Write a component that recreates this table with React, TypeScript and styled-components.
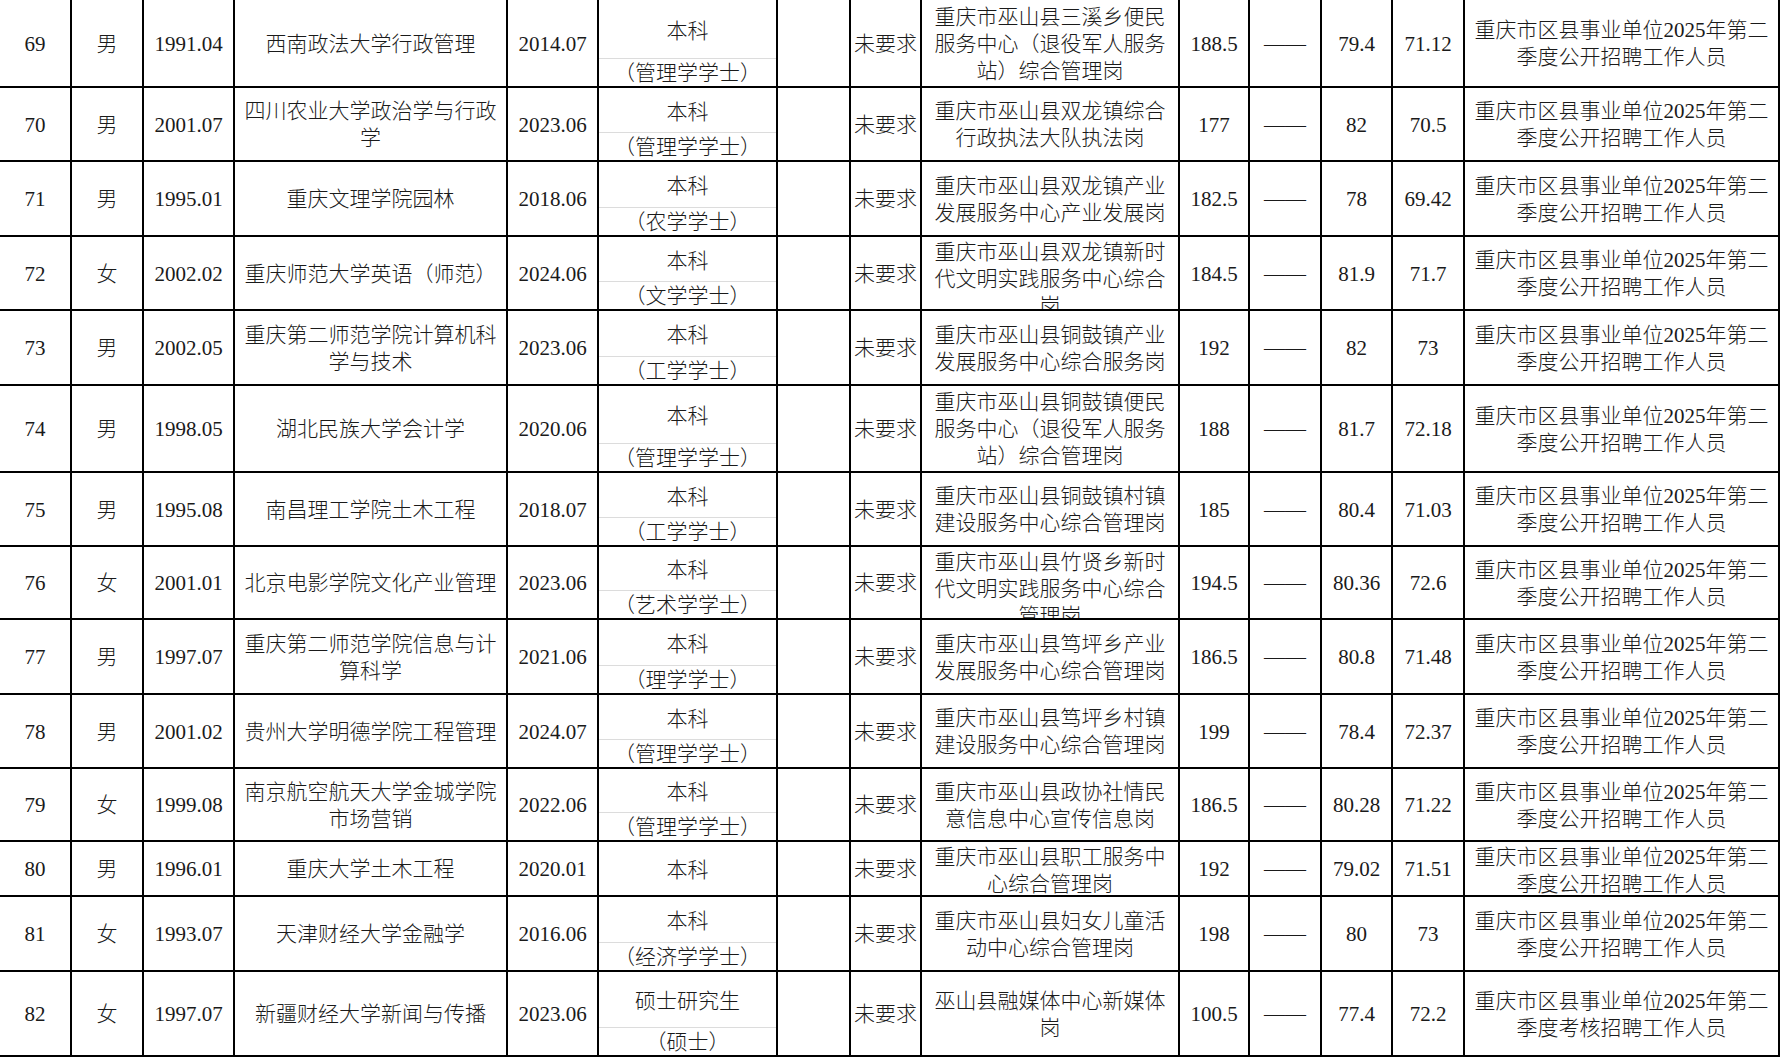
import React from 'react'
import styled, { createGlobalStyle } from 'styled-components'

const GlobalStyle = createGlobalStyle`
  html, body {
    margin: 0;
    padding: 0;
    background: #ffffff;
    overflow: hidden;
  }
  body {
    font-family: 'Liberation Serif', 'Noto Sans CJK SC', serif;
    color: #1a1a1a;
  }
`

// column widths measured from the sheet, right border included
const COLUMNS = [72, 72, 91, 273, 91, 179, 73, 71, 258, 70, 72, 71, 72, 315]

type Person = {
  no: number
  sex: string
  born: string
  major: string
  graduated: string
  degree: string
  title?: string
  position: string
  written: string
  interview: string
  total: string
  batch: string
  height: number
}

const OPEN = '重庆市区县事业单位2025年第二\n季度公开招聘工作人员'
const CHECK = '重庆市区县事业单位2025年第二\n季度考核招聘工作人员'

const people: Person[] = [
  { no: 69, sex: '男', born: '1991.04', major: '西南政法大学行政管理', graduated: '2014.07', degree: '本科', title: '（管理学学士）', position: '重庆市巫山县三溪乡便民\n服务中心（退役军人服务\n站）综合管理岗', written: '188.5', interview: '79.4', total: '71.12', batch: OPEN, height: 88 },
  { no: 70, sex: '男', born: '2001.07', major: '四川农业大学政治学与行政\n学', graduated: '2023.06', degree: '本科', title: '（管理学学士）', position: '重庆市巫山县双龙镇综合\n行政执法大队执法岗', written: '177', interview: '82', total: '70.5', batch: OPEN, height: 74 },
  { no: 71, sex: '男', born: '1995.01', major: '重庆文理学院园林', graduated: '2018.06', degree: '本科', title: '（农学学士）', position: '重庆市巫山县双龙镇产业\n发展服务中心产业发展岗', written: '182.5', interview: '78', total: '69.42', batch: OPEN, height: 75 },
  { no: 72, sex: '女', born: '2002.02', major: '重庆师范大学英语（师范）', graduated: '2024.06', degree: '本科', title: '（文学学士）', position: '重庆市巫山县双龙镇新时\n代文明实践服务中心综合\n岗', written: '184.5', interview: '81.9', total: '71.7', batch: OPEN, height: 74 },
  { no: 73, sex: '男', born: '2002.05', major: '重庆第二师范学院计算机科\n学与技术', graduated: '2023.06', degree: '本科', title: '（工学学士）', position: '重庆市巫山县铜鼓镇产业\n发展服务中心综合服务岗', written: '192', interview: '82', total: '73', batch: OPEN, height: 75 },
  { no: 74, sex: '男', born: '1998.05', major: '湖北民族大学会计学', graduated: '2020.06', degree: '本科', title: '（管理学学士）', position: '重庆市巫山县铜鼓镇便民\n服务中心（退役军人服务\n站）综合管理岗', written: '188', interview: '81.7', total: '72.18', batch: OPEN, height: 87 },
  { no: 75, sex: '男', born: '1995.08', major: '南昌理工学院土木工程', graduated: '2018.07', degree: '本科', title: '（工学学士）', position: '重庆市巫山县铜鼓镇村镇\n建设服务中心综合管理岗', written: '185', interview: '80.4', total: '71.03', batch: OPEN, height: 74 },
  { no: 76, sex: '女', born: '2001.01', major: '北京电影学院文化产业管理', graduated: '2023.06', degree: '本科', title: '（艺术学学士）', position: '重庆市巫山县竹贤乡新时\n代文明实践服务中心综合\n管理岗', written: '194.5', interview: '80.36', total: '72.6', batch: OPEN, height: 73 },
  { no: 77, sex: '男', born: '1997.07', major: '重庆第二师范学院信息与计\n算科学', graduated: '2021.06', degree: '本科', title: '（理学学士）', position: '重庆市巫山县笃坪乡产业\n发展服务中心综合管理岗', written: '186.5', interview: '80.8', total: '71.48', batch: OPEN, height: 75 },
  { no: 78, sex: '男', born: '2001.02', major: '贵州大学明德学院工程管理', graduated: '2024.07', degree: '本科', title: '（管理学学士）', position: '重庆市巫山县笃坪乡村镇\n建设服务中心综合管理岗', written: '199', interview: '78.4', total: '72.37', batch: OPEN, height: 74 },
  { no: 79, sex: '女', born: '1999.08', major: '南京航空航天大学金城学院\n市场营销', graduated: '2022.06', degree: '本科', title: '（管理学学士）', position: '重庆市巫山县政协社情民\n意信息中心宣传信息岗', written: '186.5', interview: '80.28', total: '71.22', batch: OPEN, height: 73 },
  { no: 80, sex: '男', born: '1996.01', major: '重庆大学土木工程', graduated: '2020.01', degree: '本科', position: '重庆市巫山县职工服务中\n心综合管理岗', written: '192', interview: '79.02', total: '71.51', batch: OPEN, height: 55 },
  { no: 81, sex: '女', born: '1993.07', major: '天津财经大学金融学', graduated: '2016.06', degree: '本科', title: '（经济学学士）', position: '重庆市巫山县妇女儿童活\n动中心综合管理岗', written: '198', interview: '80', total: '73', batch: OPEN, height: 75 },
  { no: 82, sex: '女', born: '1997.07', major: '新疆财经大学新闻与传播', graduated: '2023.06', degree: '硕士研究生', title: '（硕士）', position: '巫山县融媒体中心新媒体\n岗', written: '100.5', interview: '77.4', total: '72.2', batch: CHECK, height: 85 },
]

const Sheet = styled.div`
  display: flex;
  flex-direction: column;
  width: 1780px;
`

const Row = styled.div<{ $height: number }>`
  display: grid;
  grid-template-columns: ${COLUMNS.map((w) => `${w}px`).join(' ')};
  height: ${(p) => p.$height}px;
  border-bottom: 2px solid #000;
  box-sizing: border-box;
`

const Cell = styled.div`
  display: flex;
  align-items: safe center;
  justify-content: center;
  box-sizing: border-box;
  border-right: 2px solid #000;
  overflow: hidden;
  padding: 2px 4px 0;
  font-size: 21px;
  line-height: 27px;
  font-weight: 300;
  text-align: center;
  white-space: pre;
`

const DegreeCell = styled.div`
  display: flex;
  flex-direction: column;
  box-sizing: border-box;
  border-right: 2px solid #000;
  overflow: hidden;
  font-size: 21px;
  line-height: 26px;
  font-weight: 300;
`

const DegreeTop = styled.div`
  flex: 1;
  display: flex;
  align-items: center;
  justify-content: center;
  padding-top: 3px;
`

const DegreeTitle = styled.div`
  height: 27px;
  flex: none;
  display: flex;
  align-items: flex-end;
  justify-content: center;
  border-top: 1px solid #dcdcdc;
`

function App() {
  return (
    <>
      <GlobalStyle />
      <Sheet>
        {people.map((p) => (
          <Row key={p.no} $height={p.height}>
            <Cell>{p.no}</Cell>
            <Cell>{p.sex}</Cell>
            <Cell>{p.born}</Cell>
            <Cell>{p.major}</Cell>
            <Cell>{p.graduated}</Cell>
            <DegreeCell>
              <DegreeTop>{p.degree}</DegreeTop>
              {p.title && <DegreeTitle>{p.title}</DegreeTitle>}
            </DegreeCell>
            <Cell />
            <Cell>未要求</Cell>
            <Cell>{p.position}</Cell>
            <Cell>{p.written}</Cell>
            <Cell>——</Cell>
            <Cell>{p.interview}</Cell>
            <Cell>{p.total}</Cell>
            <Cell>{p.batch}</Cell>
          </Row>
        ))}
      </Sheet>
    </>
  )
}

export default App
